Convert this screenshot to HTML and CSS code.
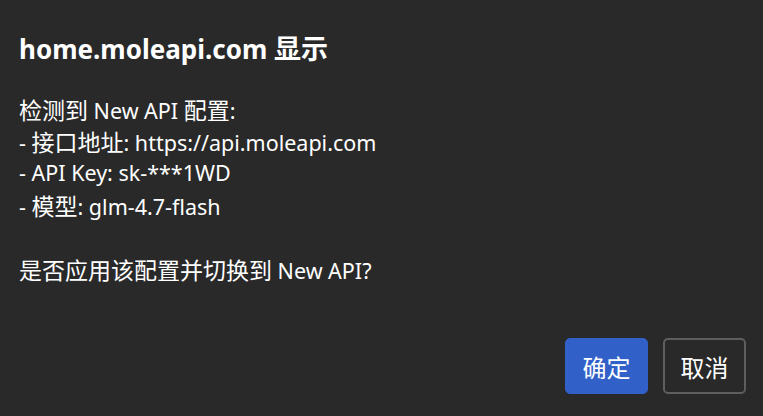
FILE: index.html
```html
<!DOCTYPE html>
<html lang="zh-CN">
<head>
<meta charset="utf-8">
<link rel="stylesheet" href="styles.css">
</head>
<body>
<div class="dialog">
  <h1 class="title">home.moleapi.com <span class="zh">显示</span></h1>
  <div class="message">
    <p class="line"><span class="zh">检测到</span> New API <span class="zh">配置</span>:</p>
    <p class="line">- <span class="zh">接口地址</span>: https://api.moleapi.com</p>
    <p class="line">- API Key: sk-***1WD</p>
    <p class="line">- <span class="zh">模型</span>: glm-4.7-flash</p>
    <p class="line blank"></p>
    <p class="line"><span class="zh">是否应用该配置并切换到</span> New API?</p>
  </div>
  <div class="actions">
    <button class="btn btn-primary">确定</button>
    <button class="btn btn-secondary">取消</button>
  </div>
</div>
</body>
</html>
```

FILE: styles.css
```css
html, body {
  margin: 0;
  padding: 0;
  background: #292929;
  height: 100%;
}
body {
  font-family: "Noto Sans", "Noto Sans CJK SC", sans-serif;
  color: #ffffff;
}
.zh {
  font-family: "Noto Sans CJK SC", sans-serif;
}
.dialog {
  box-sizing: border-box;
  height: 416px;
  display: flex;
  flex-direction: column;
  padding: 31px 17px 22px 19px;
}
.title {
  margin: 0;
  font-size: 26px;
  font-weight: 700;
  line-height: 34px;
}
.title .zh {
  font-size: 27px;
}
.message {
  margin-top: 27px;
  font-size: 21.5px;
  flex: 1;
}
.message .zh {
  font-size: 23px;
}
.line {
  margin: 0;
  height: 32px;
  line-height: 32px;
  white-space: nowrap;
}
.actions {
  display: flex;
  justify-content: flex-end;
  gap: 15px;
}
.btn {
  width: 83px;
  height: 56px;
  border-radius: 5px;
  font-family: "Noto Sans CJK SC", sans-serif;
  font-size: 24px;
  color: #ffffff;
  cursor: pointer;
  padding: 0;
}
.btn-primary {
  background: #3060c8;
  border: 1px solid #3060c8;
}
.btn-secondary {
  background: #292929;
  border: 2px solid #5e5e5e;
}
```
